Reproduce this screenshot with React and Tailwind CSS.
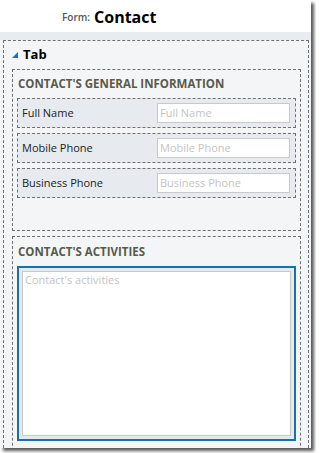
import React from "react";

const font = { fontFamily: '"Open Sans", "Noto Sans", sans-serif' };

function FieldRow({ label }) {
  return (
    <div className="h-[30px] border border-dashed border-[#707070] bg-[#e7eaef] flex items-center justify-between pl-[4px] pr-[5px]">
      <span className="text-[11px] text-[#222]">{label}</span>
      <div className="w-[133px] h-[20px] bg-white border border-[#c9c9c9] flex items-center px-[2px]">
        <span className="text-[11px] text-[#c4c4c4]">{label}</span>
      </div>
    </div>
  );
}

export default function App() {
  return (
    <div className="w-[316px] h-[453px] bg-white overflow-hidden" style={font}>
      <div className="w-[311px] h-[448px] flex flex-col shadow-[3px_3px_3px_rgba(0,0,0,0.65)]">
        {/* Header */}
        <div className="h-[32px] bg-white flex items-center pl-[62px] gap-[4px] pt-[2px]">
          <span className="text-[10px] font-semibold text-[#555]">Form:</span>
          <span className="text-[16px] font-bold text-black leading-none">Contact</span>
        </div>
        <div className="h-[8px] bg-[#e8ebef]" />

        {/* Body */}
        <div className="flex-1 bg-[#f4f5f7] pl-[3px] overflow-hidden">
          <div className="w-[306px] h-full border-t border-l border-r border-dashed border-[#707070]">
            {/* Tab */}
            <div className="h-[28px] flex items-center pl-[8px] gap-[5px]">
              <svg width="6" height="6" viewBox="0 0 6 6">
                <polygon points="6,0 6,6 0,6" fill="#1a6fd0" />
              </svg>
              <span className="text-[13px] font-bold text-black">Tab</span>
            </div>

            {/* General information section */}
            <div className="ml-[8px] w-[289px] h-[162px] border border-dashed border-[#707070] px-[4px]">
              <div className="h-[28px] flex items-center pl-[1px]">
                <span className="text-[11.5px] font-bold text-[#595a4a]">CONTACT'S GENERAL INFORMATION</span>
              </div>
              <div className="flex flex-col gap-[5px]">
                <FieldRow label="Full Name" />
                <FieldRow label="Mobile Phone" />
                <FieldRow label="Business Phone" />
              </div>
            </div>

            {/* Activities section */}
            <div className="mt-[5px] ml-[8px] w-[289px] h-[240px] border-t border-l border-r border-dashed border-[#707070] px-[4px]">
              <div className="h-[29px] flex items-center pl-[1px]">
                <span className="text-[11.5px] font-bold text-[#595a4a]">CONTACT'S ACTIVITIES</span>
              </div>
              <div className="h-[175px] border-2 border-[#1673a6] bg-[#e6e8ec] p-[3px]">
                <div className="h-full bg-white border border-[#c9c9c9] px-[2px] text-[11px] leading-[16px] text-[#c4c4c4]">
                  Contact's activities
                </div>
              </div>
            </div>
          </div>
        </div>
      </div>
    </div>
  );
}
